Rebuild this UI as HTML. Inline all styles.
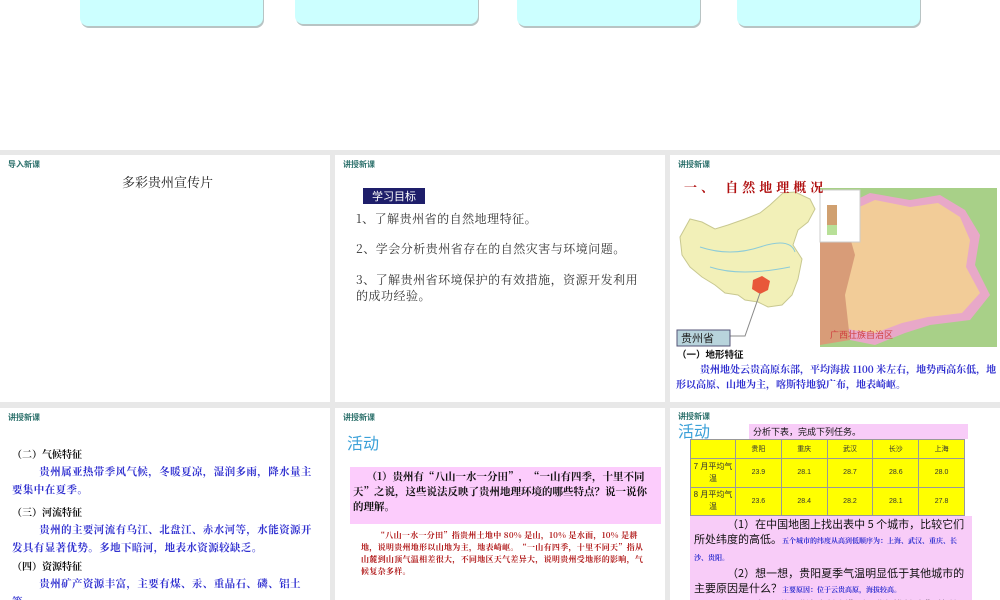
<!DOCTYPE html>
<html><head><meta charset="utf-8"><style>
*{margin:0;padding:0;box-sizing:border-box}
body{width:1000px;height:600px;overflow:hidden;background:#fff;position:relative;font-family:"Liberation Serif","Noto Serif CJK SC",serif}
.a{position:absolute}
.card{position:absolute;top:-10px;height:36px;width:183px;background:#ccffff;border-radius:0 0 8px 8px;box-shadow:1px 2px 0 #b8c4c4}
.gray{position:absolute;left:0;top:150px;width:1000px;height:450px;background:#e8e8e8}
.p{position:absolute;background:#fff;overflow:hidden}
.tag{position:absolute;left:8px;top:4px;font-size:8px;font-weight:bold;color:#2a6f6a;font-family:"Noto Sans CJK SC",sans-serif}
.s{font-family:"Noto Serif CJK SC",serif}
.k{font-family:"Noto Sans CJK SC",sans-serif}
.blue{color:#3030d0}
table{border-collapse:collapse}
td{border:1px solid #999;text-align:center;font-size:7px;font-family:"Liberation Sans",sans-serif;color:#333}
</style></head><body>
<div class="card" style="left:80px"></div>
<div class="card" style="left:295px;height:34px"></div>
<div class="card" style="left:517px"></div>
<div class="card" style="left:737px"></div>
<div class="gray"></div>

<div class="p" style="left:0;top:155px;width:330px;height:247px">
<div class="tag">导入新课</div>
<div class="a s" style="left:122px;top:17px;font-size:13px;color:#222">多彩贵州宣传片</div>
</div>

<div class="p" style="left:335px;top:155px;width:330px;height:247px">
<div class="tag">讲授新课</div>
<div class="a k" style="left:28px;top:33px;width:62px;height:16px;background:#1e1e6a;color:#fff;font-size:11px;line-height:16px;text-align:center">学习目标</div>
<div class="a s" style="left:21px;top:56px;font-size:12px;letter-spacing:0.5px;color:#333;line-height:16px">1、了解贵州省的自然地理特征。</div>
<div class="a s" style="left:21px;top:86px;font-size:12px;letter-spacing:0.5px;color:#333;line-height:16px">2、学会分析贵州省存在的自然灾害与环境问题。</div>
<div class="a s" style="left:21px;top:117px;width:285px;font-size:12px;letter-spacing:0.5px;color:#333;line-height:16px">3、了解贵州省环境保护的有效措施，资源开发利用的成功经验。</div>
</div>

<div class="p" style="left:670px;top:155px;width:330px;height:247px">
<div class="tag">讲授新课</div>
<svg class="a" style="left:0;top:0" width="330" height="247">
<g transform="translate(0,12)">
<polygon points="10,70 20,52 32,55 45,62 58,58 75,52 90,46 100,38 113,26 125,25 140,32 145,42 138,55 128,63 123,78 132,92 128,112 122,128 112,138 98,140 88,135 75,133 68,128 55,126 45,118 32,110 20,100 12,88" fill="#f2f0b8" stroke="#c8c890"/>
<path d="M30,80 Q60,90 90,80 T125,85 M40,100 Q70,110 120,100" stroke="#8ccbd8" fill="none"/>
<polygon points="83,113 92,109 100,114 98,123 90,127 82,122" fill="#e8583a"/>
<polyline points="90,126 75,169 58,169" stroke="#888" fill="none"/>
</g>
<rect x="7" y="175" width="53" height="16" fill="#b8d4dc" stroke="#557"/>
<text x="11" y="187" font-size="11" fill="#222" font-family="Noto Sans CJK SC">贵州省</text>
<rect x="150" y="33" width="177" height="159" fill="#a8d088"/>
<polygon points="155,60 200,38 240,45 270,40 295,55 310,80 305,110 320,140 300,165 260,170 235,178 205,190 180,185 160,175 150,140" fill="#e8a8c8"/>
<polygon points="160,65 205,45 240,52 268,48 290,62 300,85 296,112 310,138 292,158 258,162 232,168 205,178 182,175 165,168 155,140" fill="#f2cc98"/>
<polygon points="150,60 175,65 185,100 175,140 180,185 150,190" fill="#d89c78"/>
<rect x="150" y="35" width="40" height="52" fill="#fff" stroke="#ccc"/>
<rect x="157" y="50" width="10" height="30" fill="#d0a070"/>
<rect x="157" y="70" width="10" height="10" fill="#b8e098"/>
<text x="160" y="183" font-size="9" fill="#d04040" font-family="Noto Sans CJK SC">广西壮族自治区</text>
</svg>
<div class="a s" style="left:14px;top:22px;font-size:13px;font-weight:bold;color:#b01010;letter-spacing:4px">一、 自然地理概况</div>
<div class="a k" style="left:7px;top:192px;font-size:9.5px;font-weight:bold;color:#111">（一）地形特征</div>
<div class="a s blue" style="left:6px;top:206px;width:322px;font-size:10px;line-height:15px;font-weight:bold;text-indent:2.4em">贵州地处云贵高原东部，平均海拔 1100 米左右，地势西高东低，地形以高原、山地为主，喀斯特地貌广布，地表崎岖。</div>
</div>

<div class="p" style="left:0;top:408px;width:330px;height:192px">
<div class="tag">讲授新课</div>
<div class="a s" style="left:12px;top:38px;font-size:10px;font-weight:bold;color:#111">（二）气候特征</div>
<div class="a s blue" style="left:12px;top:55px;width:306px;font-size:10.5px;line-height:18px;font-weight:bold;text-indent:2.6em;letter-spacing:0.4px">贵州属亚热带季风气候，冬暖夏凉，湿润多雨，降水量主要集中在夏季。</div>
<div class="a s" style="left:12px;top:96px;font-size:10px;font-weight:bold;color:#111">（三）河流特征</div>
<div class="a s blue" style="left:12px;top:113px;width:306px;font-size:10.5px;line-height:18px;font-weight:bold;text-indent:2.6em;letter-spacing:0.4px">贵州的主要河流有乌江、北盘江、赤水河等，水能资源开发具有显著优势。多地下暗河，地表水资源较缺乏。</div>
<div class="a s" style="left:12px;top:150px;font-size:10px;font-weight:bold;color:#111">（四）资源特征</div>
<div class="a s blue" style="left:12px;top:167px;width:306px;font-size:10.5px;line-height:18px;font-weight:bold;text-indent:2.6em;letter-spacing:0.4px">贵州矿产资源丰富，主要有煤、汞、重晶石、磷、铝土等。</div>
</div>

<div class="p" style="left:335px;top:408px;width:330px;height:192px">
<div class="tag">讲授新课</div>
<div class="a k" style="left:12px;top:22px;font-size:16px;color:#3aa0d8">活动</div>
<div class="a" style="left:15px;top:59px;width:311px;height:57px;background:#fcccfc"></div>
<div class="a s" style="left:18px;top:61px;width:304px;font-size:10.5px;line-height:15px;font-weight:bold;color:#111;text-indent:1.3em">（1）贵州有“八山一水一分田”，“一山有四季，十里不同天”之说，这些说法反映了贵州地理环境的哪些特点？说一说你的理解。</div>
<div class="a s" style="left:26px;top:122px;width:290px;font-size:8px;line-height:12px;font-weight:bold;color:#b01818;text-indent:2em;letter-spacing:0.3px">“八山一水一分田”指贵州土地中 80% 是山，10% 是水面，10% 是耕地，说明贵州地形以山地为主，地表崎岖。“一山有四季，十里不同天”指从山麓到山顶气温相差很大，不同地区天气差异大，说明贵州受地形的影响，气候复杂多样。</div>
</div>

<div class="p" style="left:670px;top:408px;width:330px;height:192px">
<div class="tag" style="top:3px">讲授新课</div>
<div class="a k" style="left:8px;top:10px;font-size:16px;color:#3aa0d8">活动</div>
<div class="a k" style="left:79px;top:16px;width:219px;height:15px;background:#f8ccf8;font-size:9px;line-height:15px;padding-left:4px;color:#111">分析下表，完成下列任务。</div>
<table class="a" style="left:20px;top:31px;width:275px;height:77px;background:#ffff00">
<tr style="height:19px"><td style="width:45px"></td><td>贵阳</td><td>重庆</td><td>武汉</td><td>长沙</td><td>上海</td></tr>
<tr><td style="font-size:8px;line-height:12px">7 月平均气温</td><td>23.9</td><td>28.1</td><td>28.7</td><td>28.6</td><td>28.0</td></tr>
<tr><td style="font-size:8px;line-height:12px">8 月平均气温</td><td>23.6</td><td>28.4</td><td>28.2</td><td>28.1</td><td>27.8</td></tr>
</table>
<div class="a" style="left:20px;top:108px;width:282px;height:84px;background:#f8ccf8"></div>
<div class="a k" style="left:24px;top:109px;width:276px;font-size:11px;line-height:15px;color:#111">
<div style="text-indent:3em">（1）在中国地图上找出表中 5 个城市，比较它们所处纬度的高低。<span class="s blue" style="font-size:7px;font-weight:bold">五个城市的纬度从高到低顺序为：上海、武汉、重庆、长沙、贵阳。</span></div>
<div style="text-indent:3em">（2）想一想，贵阳夏季气温明显低于其他城市的主要原因是什么？<span class="s blue" style="font-size:7px;font-weight:bold">主要原因：位于云贵高原，海拔较高。</span></div>
<div style="text-indent:3em">（3）有人说，“纬度较低”和“海拔较高”的共同影响，形成了贵州“夏暑适中”的气候特征，你认同吗？</div>
</div>
</div>
</body></html>
